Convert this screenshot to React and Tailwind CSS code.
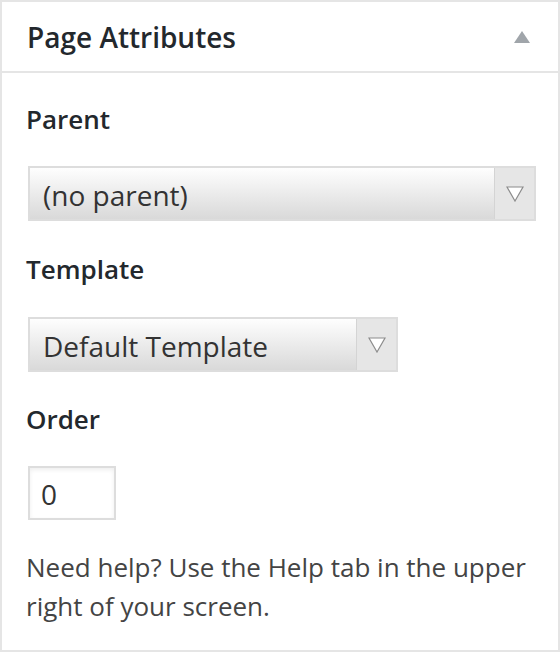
import React from "react";

const font = { fontFamily: '"Open Sans", "Noto Sans", sans-serif' };

function Arrow() {
  return (
    <svg width="18" height="16" viewBox="0 0 18 16">
      <polygon points="1,1 17,1 9,15" fill="#fff" stroke="#8c8c8c" strokeWidth="1.2" />
    </svg>
  );
}

function FakeSelect({ value, width }) {
  return (
    <div className={`ml-[2px] flex h-[55px] ${width} border-2 border-[#dddddd] bg-gradient-to-b from-[#fefefe] to-[#d9d9d9]`}>
      <div className="flex flex-1 items-center pl-[13px] pt-[3px] text-[28px] text-[#333]">{value}</div>
      <div className="flex w-[40px] items-center justify-center border-l border-[#d4d4d4] bg-[#e6e6e6]">
        <Arrow />
      </div>
    </div>
  );
}

export default function App() {
  return (
    <div className="min-h-screen bg-white" style={font}>
      <div className="h-[652px] border-2 border-[#e5e5e5] bg-white">
        {/* header */}
        <div className="flex h-[71px] items-center justify-between border-b-2 border-[#e5e5e5] pl-[25px] pr-[28px]">
          <h2 className="text-[28px] font-semibold text-[#23282d]">Page Attributes</h2>
          <svg width="16" height="12" viewBox="0 0 16 12">
            <polygon points="8,0 16,12 0,12" fill="#a0a5aa" />
          </svg>
        </div>

        <div className="px-[24px]">
          <p className="mt-[27px] text-[26px] font-semibold leading-[39px] text-[#23282d]">Parent</p>
          <div className="mt-[27px]">
            <FakeSelect value="(no parent)" width="w-[508px]" />
          </div>

          <p className="mt-[29px] text-[26px] font-semibold leading-[39px] text-[#23282d]">Template</p>
          <div className="mt-[28px]">
            <FakeSelect value="Default Template" width="w-[370px]" />
          </div>

          <p className="mt-[28px] text-[26px] font-semibold leading-[39px] text-[#23282d]">Order</p>
          <div className="ml-[2px] mt-[27px] flex h-[54px] w-[88px] items-center border-2 border-[#dddddd] bg-white pl-[11px] pt-[2px] text-[28px] text-[#333] shadow-[inset_0_2px_4px_rgba(0,0,0,0.07)]">
            0
          </div>

          <p className="mt-[28px] text-[26px] leading-[39px] text-[#444]">
            Need help? Use the Help tab in the upper right of your screen.
          </p>
        </div>
      </div>
    </div>
  );
}
